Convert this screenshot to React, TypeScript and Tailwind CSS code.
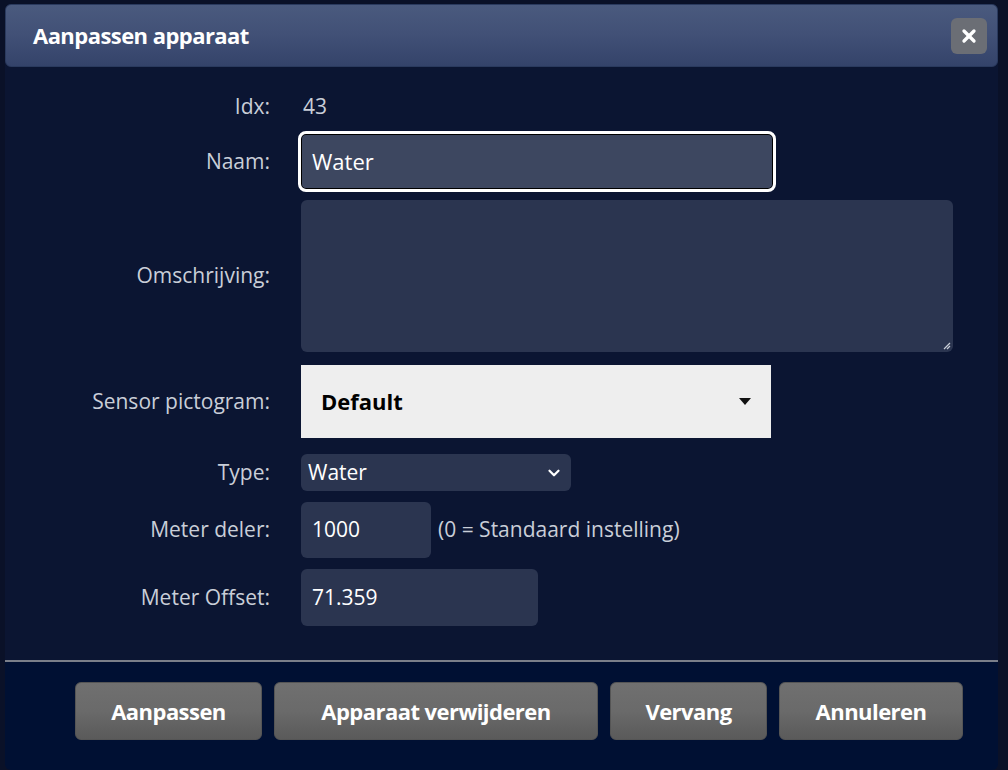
import { X, ChevronDown } from "lucide-react"

const font = { fontFamily: '"Open Sans", "Noto Sans", sans-serif' }

function Label({ children }: { children: React.ReactNode }) {
  return <div className="w-[265px] shrink-0 pr-0 text-right text-[21px] text-[#c9ced8]">{children}</div>
}

export default function App() {
  return (
    <div className="h-[770px] w-[1008px] overflow-hidden bg-[#0a1128] pt-[4px] pl-[5px]" style={font}>
      <div className="flex h-[766px] w-[993px] flex-col rounded-md bg-[#0b1532]">
        {/* header */}
        <div className="flex h-[63px] items-center justify-between rounded-md border border-[#2a3a5e] bg-gradient-to-b from-[#4a5a7e] via-[#415076] to-[#34436a] pl-[27px] pr-[10px]">
          <span className="text-[22px] font-bold tracking-tight text-white">Aanpassen apparaat</span>
          <div className="flex h-[36px] w-[36px] items-center justify-center rounded-md bg-[#6b6e75]">
            <X className="h-[20px] w-[20px] text-white" strokeWidth={4} />
          </div>
        </div>

        {/* body */}
        <div className="flex flex-1 flex-col gap-0 pt-[22px]">
          <div className="flex h-[36px] items-center gap-[33px]">
            <Label>Idx:</Label>
            <span className="text-[21px] text-[#c9ced8]">43</span>
          </div>
          <div className="mt-[6px] flex items-center gap-[28px]">
            <Label>Naam:</Label>
            <div className="flex h-[61px] w-[478px] items-center rounded-lg border-[3px] border-white bg-[#3d4760] px-[11px] text-[22px] text-white shadow-[inset_0_0_0_1px_#000]">Water</div>
          </div>
          <div className="mt-[8px] flex items-center gap-[31px]">
            <Label>Omschrijving:</Label>
            <div className="relative h-[152px] w-[652px] rounded-md bg-[#2b3550]">
              <svg className="absolute bottom-[2px] right-[2px]" width="10" height="10" viewBox="0 0 10 10">
                <path d="M9 3 L3 9 M9 6 L6 9" stroke="#c9ced8" strokeWidth="1.2" />
              </svg>
            </div>
          </div>
          <div className="mt-[13px] flex items-center gap-[31px]">
            <Label>Sensor pictogram:</Label>
            <div className="flex h-[73px] w-[470px] items-center justify-between bg-[#eeeeee] pl-[20px] pr-[20px]">
              <span className="text-[22px] font-bold text-black">Default</span>
              <svg width="12" height="7" viewBox="0 0 12 7"><path d="M0 0 H12 L6 7 Z" fill="#111" /></svg>
            </div>
          </div>
          <div className="mt-[16px] flex items-center gap-[31px]">
            <Label>Type:</Label>
            <div className="flex h-[37px] w-[270px] items-center justify-between rounded-md bg-[#2b3550] pl-[7px] pr-[8px] text-[21px] text-white">
              <span>Water</span>
              <ChevronDown className="h-[18px] w-[18px]" strokeWidth={3} />
            </div>
          </div>
          <div className="mt-[11px] flex items-center gap-[31px]">
            <Label>Meter deler:</Label>
            <div className="flex h-[56px] w-[130px] items-center rounded-md bg-[#2b3550] px-[11px] text-[21px] text-white">1000</div>
            <span className="-ml-[24px] text-[21px] text-[#c9ced8]">(0 = Standaard instelling)</span>
          </div>
          <div className="mt-[11px] flex items-center gap-[31px]">
            <Label>Meter Offset:</Label>
            <div className="flex h-[57px] w-[237px] items-center rounded-md bg-[#2b3550] px-[11px] text-[21px] text-white">71.359</div>
          </div>
        </div>

        {/* footer */}
        <div className="flex h-[110px] items-start gap-[12px] rounded-b-md border-t-2 border-[#7a7f8a] bg-[#001033] pl-[70px] pt-[20px]">
          {[
            ["Aanpassen", "w-[187px]"],
            ["Apparaat verwijderen", "w-[324px]"],
            ["Vervang", "w-[157px]"],
            ["Annuleren", "w-[184px]"],
          ].map(([t, w]) => (
            <button
              key={t}
              className={`${w} h-[58px] rounded-md border border-[#555] bg-gradient-to-b from-[#707070] via-[#6a6a6a] to-[#5a5a5a] text-[22px] font-bold tracking-tight text-white`}
            >
              {t}
            </button>
          ))}
        </div>
      </div>
    </div>
  )
}
